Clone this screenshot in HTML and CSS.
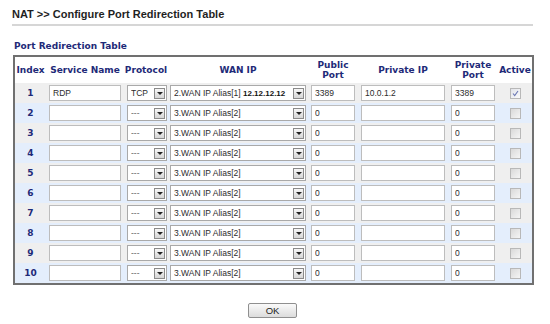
FILE: index.html
```html
<!DOCTYPE html>
<html lang="en">
  <head>
    <meta charset="UTF-8" />
    <title>NAT - Port Redirection</title>
    <link rel="stylesheet" href="styles.css">
  </head>
  <body>
    <div class="page">
      <h1 class="title">NAT &gt;&gt; Configure Port Redirection Table</h1>
      <h2 class="caption">Port Redirection Table</h2>

      <div class="table">
        <div class="row head">
          <span>Index</span>
          <span>Service Name</span>
          <span>Protocol</span>
          <span>WAN IP</span>
          <span>Public<br>Port</span>
          <span>Private IP</span>
          <span>Private<br>Port</span>
          <span>Active</span>
        </div>

        <div class="row odd">
          <span class="num">1</span>
          <input class="text svc" type="text" value="RDP">
          <div class="select proto"><span class="val">TCP</span><span class="arrow"></span></div>
          <div class="select wan"><span class="val">2.WAN IP Alias[1] <b>12.12.12.12</b></span><span class="arrow"></span></div>
          <input class="text port" type="text" value="3389">
          <input class="text ip" type="text" value="10.0.1.2">
          <input class="text port" type="text" value="3389">
          <span class="check on"><svg width="9" height="9" viewBox="0 0 9 9"><path d="M2 4.5 L3.7 6.5 L7 2" fill="none" stroke="#6a77b4" stroke-width="1.1"/></svg></span>
        </div>

        <div class="row even">
          <span class="num">2</span>
          <input class="text svc" type="text" value="">
          <div class="select proto"><span class="val dash">---</span><span class="arrow"></span></div>
          <div class="select wan"><span class="val">3.WAN IP Alias[2]</span><span class="arrow"></span></div>
          <input class="text port" type="text" value="0">
          <input class="text ip" type="text" value="">
          <input class="text port" type="text" value="0">
          <span class="check"></span>
        </div>

        <div class="row odd">
          <span class="num">3</span>
          <input class="text svc" type="text" value="">
          <div class="select proto"><span class="val dash">---</span><span class="arrow"></span></div>
          <div class="select wan"><span class="val">3.WAN IP Alias[2]</span><span class="arrow"></span></div>
          <input class="text port" type="text" value="0">
          <input class="text ip" type="text" value="">
          <input class="text port" type="text" value="0">
          <span class="check"></span>
        </div>

        <div class="row even">
          <span class="num">4</span>
          <input class="text svc" type="text" value="">
          <div class="select proto"><span class="val dash">---</span><span class="arrow"></span></div>
          <div class="select wan"><span class="val">3.WAN IP Alias[2]</span><span class="arrow"></span></div>
          <input class="text port" type="text" value="0">
          <input class="text ip" type="text" value="">
          <input class="text port" type="text" value="0">
          <span class="check"></span>
        </div>

        <div class="row odd">
          <span class="num">5</span>
          <input class="text svc" type="text" value="">
          <div class="select proto"><span class="val dash">---</span><span class="arrow"></span></div>
          <div class="select wan"><span class="val">3.WAN IP Alias[2]</span><span class="arrow"></span></div>
          <input class="text port" type="text" value="0">
          <input class="text ip" type="text" value="">
          <input class="text port" type="text" value="0">
          <span class="check"></span>
        </div>

        <div class="row even">
          <span class="num">6</span>
          <input class="text svc" type="text" value="">
          <div class="select proto"><span class="val dash">---</span><span class="arrow"></span></div>
          <div class="select wan"><span class="val">3.WAN IP Alias[2]</span><span class="arrow"></span></div>
          <input class="text port" type="text" value="0">
          <input class="text ip" type="text" value="">
          <input class="text port" type="text" value="0">
          <span class="check"></span>
        </div>

        <div class="row odd">
          <span class="num">7</span>
          <input class="text svc" type="text" value="">
          <div class="select proto"><span class="val dash">---</span><span class="arrow"></span></div>
          <div class="select wan"><span class="val">3.WAN IP Alias[2]</span><span class="arrow"></span></div>
          <input class="text port" type="text" value="0">
          <input class="text ip" type="text" value="">
          <input class="text port" type="text" value="0">
          <span class="check"></span>
        </div>

        <div class="row even">
          <span class="num">8</span>
          <input class="text svc" type="text" value="">
          <div class="select proto"><span class="val dash">---</span><span class="arrow"></span></div>
          <div class="select wan"><span class="val">3.WAN IP Alias[2]</span><span class="arrow"></span></div>
          <input class="text port" type="text" value="0">
          <input class="text ip" type="text" value="">
          <input class="text port" type="text" value="0">
          <span class="check"></span>
        </div>

        <div class="row odd">
          <span class="num">9</span>
          <input class="text svc" type="text" value="">
          <div class="select proto"><span class="val dash">---</span><span class="arrow"></span></div>
          <div class="select wan"><span class="val">3.WAN IP Alias[2]</span><span class="arrow"></span></div>
          <input class="text port" type="text" value="0">
          <input class="text ip" type="text" value="">
          <input class="text port" type="text" value="0">
          <span class="check"></span>
        </div>

        <div class="row even">
          <span class="num">10</span>
          <input class="text svc" type="text" value="">
          <div class="select proto"><span class="val dash">---</span><span class="arrow"></span></div>
          <div class="select wan"><span class="val">3.WAN IP Alias[2]</span><span class="arrow"></span></div>
          <input class="text port" type="text" value="0">
          <input class="text ip" type="text" value="">
          <input class="text port" type="text" value="0">
          <span class="check"></span>
        </div>
      </div>

      <div class="actions">
        <button class="btn" type="button">OK</button>
      </div>
    </div>
  </body>
</html>
```

FILE: styles.css
```css
body {
  margin: 0;
  background: #fff;
  font-family: "Liberation Sans", Arial, sans-serif;
  color: #222;
}

.page {
  width: 521px;
  padding: 8px 0 0 12px;
}

.title {
  margin: 0;
  padding-bottom: 3px;
  font-size: 11px;
  line-height: 13px;
  font-weight: bold;
  color: #1f1f1f;
  border-bottom: 2px solid #d6d6d6;
}

.caption {
  margin: 15px 0 3px 2px;
  font: bold 9px/11px "DejaVu Sans", Verdana, sans-serif;
  color: #1e2a78;
}

.table {
  width: 517px;
  margin-left: 1px;
  border: 2px solid #707070;
}

.row {
  display: grid;
  grid-template-columns: 31px 78px 44px 140px 50px 90px 50px 34px;
  align-items: center;
  height: 20px;
}

.row.head {
  height: 26px;
  background: #fff;
}

.row.head span {
  text-align: center;
  font: bold 9px/10px "DejaVu Sans", Verdana, sans-serif;
  color: #1e2a78;
}

.row.odd {
  background: #efefef;
}

.row.even {
  background: #e4eefc;
}

.num {
  text-align: center;
  font: bold 9px "DejaVu Sans", Verdana, sans-serif;
  color: #1e2a78;
}

.text {
  box-sizing: border-box;
  height: 16px;
  margin: 0 0 0 3px;
  padding: 0 3px;
  border: 1px solid #bdbdbd;
  background: #fff;
  font: 8.5px "Liberation Sans", Arial, sans-serif;
  color: #2c2c2c;
  outline: none;
}

.svc {
  width: 72px;
}

.port {
  width: 44px;
}

.ip {
  width: 84px;
}

.select {
  box-sizing: border-box;
  display: flex;
  align-items: center;
  height: 16px;
  margin-left: 3px;
  padding-left: 3px;
  border: 1px solid #a9a9a9;
  background: #fff;
}

.select.proto {
  width: 40px;
}

.select.wan {
  width: 136px;
  margin-left: 2px;
}

.select .val {
  flex: 1;
  overflow: hidden;
  white-space: nowrap;
  font-size: 8.5px;
  color: #2c2c2c;
}

.select .val b {
  font-size: 8px;
  color: #111;
}

.select .val.dash {
  color: #666;
}

.select .arrow {
  box-sizing: border-box;
  display: flex;
  align-items: center;
  justify-content: center;
  width: 11px;
  height: 11px;
  margin-right: 1px;
  border: 1px solid #8a8a8a;
  background: linear-gradient(#f7f7f7, #d6d6d6);
}

.select .arrow::after {
  content: "";
  border-left: 3px solid transparent;
  border-right: 3px solid transparent;
  border-top: 3px solid #222;
}

.check {
  box-sizing: border-box;
  justify-self: center;
  display: flex;
  align-items: center;
  justify-content: center;
  width: 11px;
  height: 11px;
  border: 1px solid #b8b8b8;
  background: linear-gradient(135deg, #d9d9d9, #f5f5f5);
}

.check.on {
  background: linear-gradient(135deg, #e2e4ea, #fafafa);
}

.actions {
  padding-top: 15px;
  text-align: center;
}

.btn {
  width: 49px;
  height: 15px;
  padding: 0;
  border: 1px solid #8f8f8f;
  border-radius: 2px;
  background: linear-gradient(#fafafa, #dcdcdc);
  font: 9.5px "Liberation Sans", Arial, sans-serif;
  color: #222;
}
```
